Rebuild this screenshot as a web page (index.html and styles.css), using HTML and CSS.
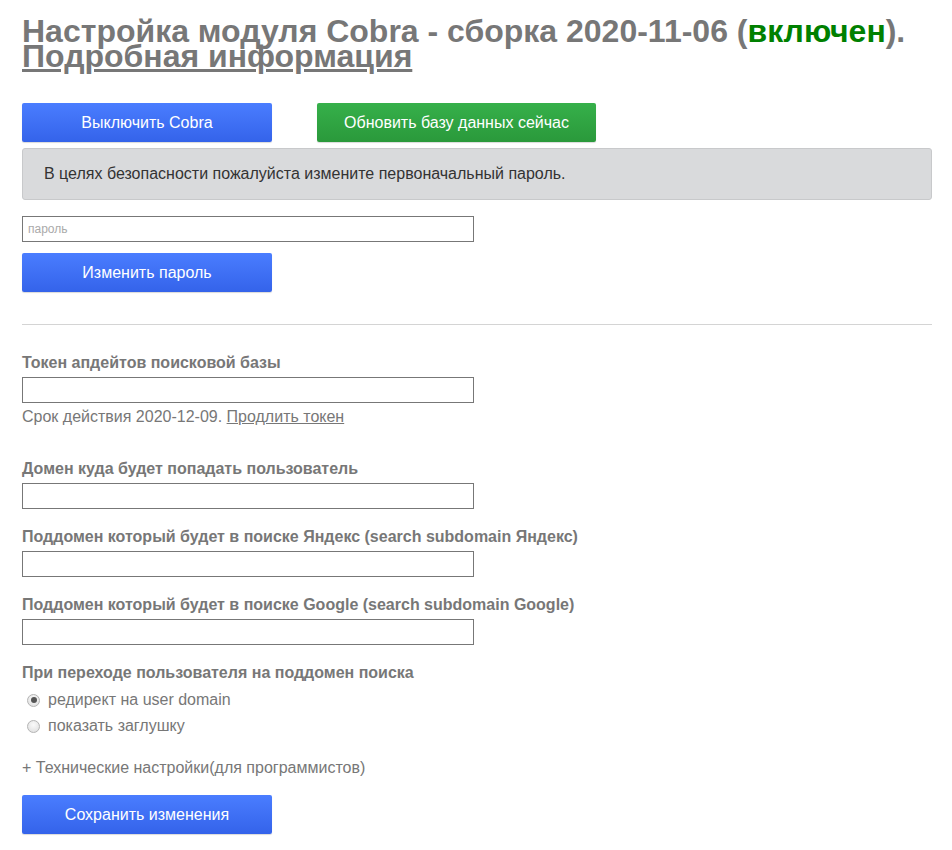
FILE: index.html
```html
<!DOCTYPE html>
<html lang="ru">
<head>
<meta charset="utf-8">
<title>Настройка модуля Cobra</title>
<link rel="stylesheet" href="styles.css">
</head>
<body>
<div class="page">
  <h1 class="title">Настройка модуля Cobra - сборка 2020-11-06 (<span class="on">включен</span>).<br><a href="#" class="more">Подробная информация</a></h1>

  <div class="actions">
    <button class="btn btn-blue">Выключить Cobra</button>
    <button class="btn btn-green">Обновить базу данных сейчас</button>
  </div>

  <div class="alert">В целях безопасности пожалуйста измените первоначальный пароль.</div>

  <div class="pass">
    <input type="text" class="field field-pass" placeholder="пароль">
    <button class="btn btn-blue">Изменить пароль</button>
  </div>

  <hr class="sep">

  <div class="group group-token">
    <label class="label">Токен апдейтов поисковой базы</label>
    <input type="text" class="field">
    <div class="note">Срок действия 2020-12-09. <a href="#" class="link">Продлить токен</a></div>
  </div>

  <div class="group group-domain">
    <label class="label">Домен куда будет попадать пользователь</label>
    <input type="text" class="field">
  </div>

  <div class="group">
    <label class="label">Поддомен который будет в поиске Яндекс (search subdomain Яндекс)</label>
    <input type="text" class="field">
  </div>

  <div class="group">
    <label class="label">Поддомен который будет в поиске Google (search subdomain Google)</label>
    <input type="text" class="field">
  </div>

  <div class="group">
    <label class="label">При переходе пользователя на поддомен поиска</label>
    <label class="radio"><input type="radio" name="mode" checked> редирект на user domain</label>
    <label class="radio"><input type="radio" name="mode"> показать заглушку</label>
  </div>

  <div class="tech">+ Технические настройки(для программистов)</div>

  <button class="btn btn-blue">Сохранить изменения</button>
</div>
</body>
</html>
```

FILE: styles.css
```css
* { box-sizing: border-box; }

body {
  margin: 0;
  font-family: "Liberation Sans", Arial, sans-serif;
  color: #777;
  background: #fff;
}

.page {
  padding: 19px 20px 16px 22px;
}

.title {
  margin: 0;
  font-size: 32px;
  line-height: 25px;
  font-weight: bold;
  color: #777;
}

.title .on { color: #008000; }

.title .more {
  color: #777;
  text-decoration: underline;
}

.actions {
  display: flex;
  gap: 45px;
  margin-top: 34px;
}

.btn {
  display: block;
  width: 250px;
  height: 39px;
  border: none;
  border-radius: 2px;
  color: #fff;
  font-family: "Liberation Sans", Arial, sans-serif;
  font-size: 16px;
  cursor: pointer;
  box-shadow: 0 1px 1px rgba(0,0,0,0.15);
}

.btn-blue {
  background: linear-gradient(#4a7dff, #3463ea);
}

.btn-green {
  width: 279px;
  background: linear-gradient(#36b04a, #2a993b);
}

.alert {
  margin-top: 6px;
  height: 52px;
  background: #d9dadc;
  border: 1px solid #c8c9cb;
  border-radius: 3px;
  padding: 0 21px;
  display: flex;
  align-items: center;
  font-size: 16px;
  color: #333;
}

.pass {
  margin-top: 16px;
  display: flex;
  flex-direction: column;
  gap: 11px;
}

.field {
  display: block;
  width: 452px;
  height: 26px;
  border: 1px solid #777;
  border-radius: 0;
  padding: 0 5px;
  font-family: "Liberation Sans", Arial, sans-serif;
  font-size: 12px;
  color: #333;
  background: #fff;
}

.field::placeholder { color: #aaa; }

.sep {
  margin: 32px 0 0;
  border: none;
  border-top: 1px solid #d4d4d4;
}

.group {
  display: flex;
  flex-direction: column;
  margin-top: 19px;
}

.group-token { margin-top: 29px; }
.group-domain { margin-top: 34px; }

.label {
  font-size: 16px;
  font-weight: bold;
  line-height: 18px;
  margin-bottom: 5px;
  color: #777;
}

.note {
  font-size: 16px;
  line-height: 18px;
  margin-top: 5px;
}

.link { color: #777; text-decoration: underline; }

.radio {
  display: flex;
  align-items: center;
  font-size: 16px;
  line-height: 26px;
  height: 26px;
  padding-left: 5px;
}

.radio:first-of-type { margin-top: 2px; }

.radio input {
  appearance: none;
  -webkit-appearance: none;
  margin: 0 8px 0 0;
  width: 13px;
  height: 13px;
  border-radius: 50%;
  border: 1px solid #b4b4b4;
  background: radial-gradient(circle at 50% 35%, #fafafa, #dcdcdc);
  position: relative;
}

.radio input:checked::after {
  content: "";
  position: absolute;
  left: 2.5px;
  top: 2.5px;
  width: 6px;
  height: 6px;
  border-radius: 50%;
  background: #555;
}

.tech {
  margin-top: 20px;
  font-size: 16px;
  line-height: 18px;
  margin-bottom: 18px;
}
```
